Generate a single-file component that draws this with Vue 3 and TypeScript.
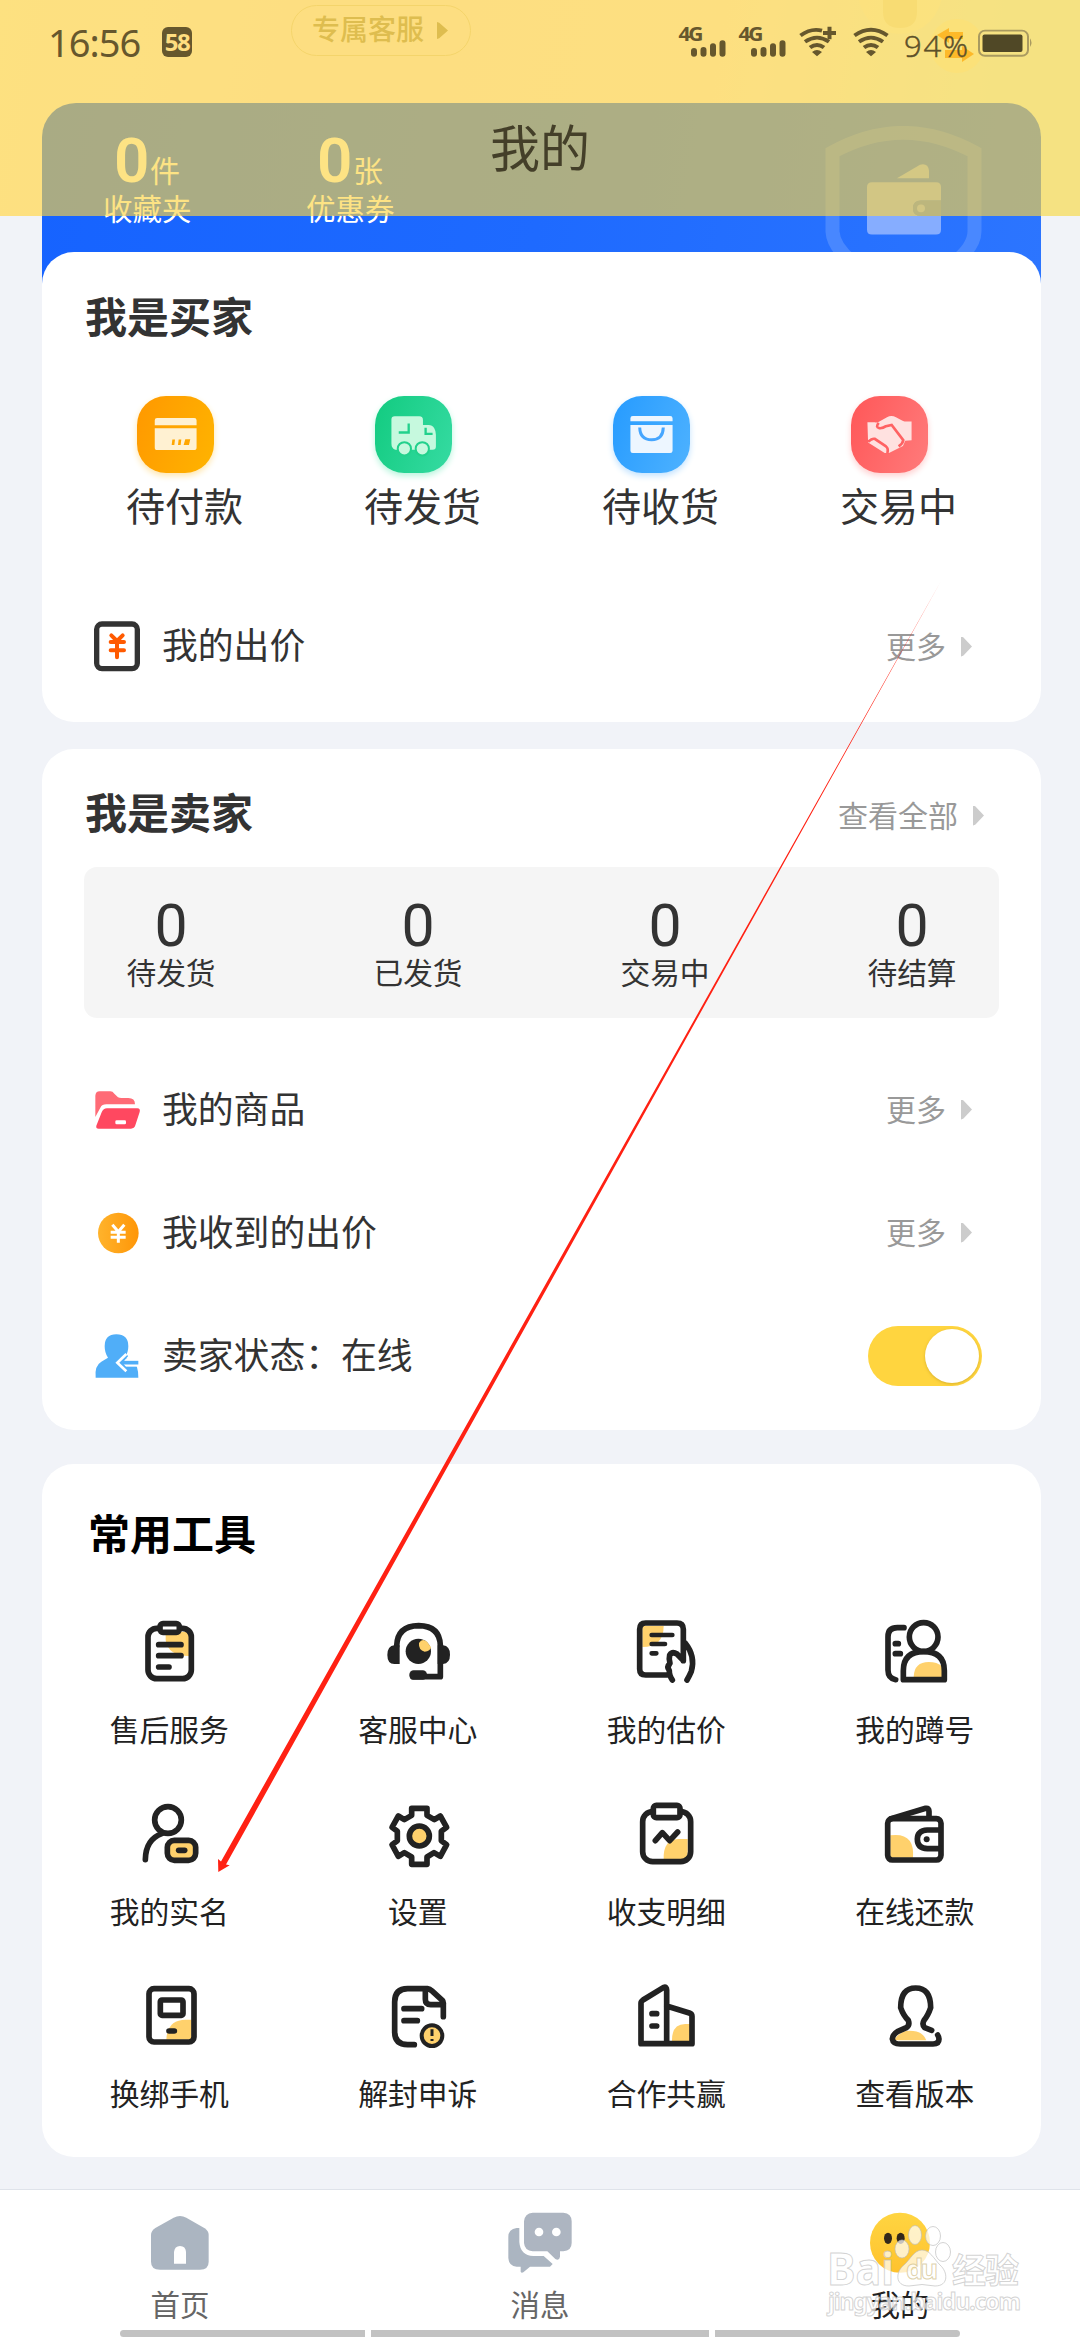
<script setup lang="ts">
interface Label { id: string; label: string }

const favourites = [
  { n: 0, unit: '件', label: '收藏夹' },
  { n: 0, unit: '张', label: '优惠券' },
]
const orders: Label[] = [
  { id: 'pay', label: '待付款' },
  { id: 'ship', label: '待发货' },
  { id: 'receive', label: '待收货' },
  { id: 'deal', label: '交易中' },
]
const stats = ['待发货', '已发货', '交易中', '待结算']
const tools: Label[] = [
  { id: 'after', label: '售后服务' },
  { id: 'service', label: '客服中心' },
  { id: 'value', label: '我的估价' },
  { id: 'squat', label: '我的蹲号' },
  { id: 'realname', label: '我的实名' },
  { id: 'settings', label: '设置' },
  { id: 'detail', label: '收支明细' },
  { id: 'repay', label: '在线还款' },
  { id: 'phone', label: '换绑手机' },
  { id: 'appeal', label: '解封申诉' },
  { id: 'coop', label: '合作共赢' },
  { id: 'version', label: '查看版本' },
]
</script>

<template>
  <div class="page">
    <section class="hero">
      <div class="service"><span>专属客服</span><i class="tri"></i></div>
      <svg class="mascot" viewBox="0 0 135 90">
        <circle cx="50" cy="-8" r="42" fill="#fffbe9" opacity=".6" />
        <path d="M33 0H67V12Q67 28 50 28Q33 28 33 12Z" fill="#e5d4a0" opacity=".4" />
        <circle cx="107" cy="46" r="27" fill="#fff8d5" opacity=".7" />
        <path d="M87 35L99 28V32H113V39H99V43ZM124 54L112 62V58H95V50H112V46Z" fill="#ff8a00" />
      </svg>
      <div class="blue">
        <div v-for="f in favourites" :key="f.label" class="fav">
          <div class="favnum"><b>{{ f.n }}</b><span>{{ f.unit }}</span></div>
          <div class="favlabel">{{ f.label }}</div>
        </div>
        <svg class="shield" viewBox="825 131 157 160" preserveAspectRatio="none">
          <path d="M832.5 158Q903 118 974.500 158V240Q974 270 903 300Q834 270 832.500 240Z" fill="none" stroke="#5b93ff" stroke-opacity=".65" stroke-width="14" />
          <path d="M897 185L920 171Q928 169 929 177V185Z" fill="#8cb3ff" />
          <path d="M872 189H936Q941 189 941 194V208H921Q913 208 913 216Q913 224 921 224H941V238Q941 243 936 243H872Q867 243 867 238V194Q867 189 872 189Z" fill="#86adff" />
          <path d="M941 208H921Q913 208 913 216Q913 224 921 224H941Z" fill="#4b82ec" />
          <circle cx="921" cy="216" r="4" fill="#86adff" />
        </svg>
      </div>
    </section>

    <section class="card buyer">
      <h2>我是买家</h2>
      <div class="orders">
        <div v-for="o in orders" :key="o.id" class="order">
          <div class="tile" :class="o.id">
            <svg v-if="o.id === 'pay'" viewBox="231 77 231 232">
              <path d="M291 143H403Q410 143 410 150V165H284V150Q284 143 291 143ZM284 174H410V232Q410 240 402 240H291Q284 240 284 232Z" fill="#fff1d2" />
              <path d="M337 208h8l-2 17h-8zM356 208h8l-2 17h-8zM376 207h15l-4 18h-16z" fill="#ffa600" />
            </svg>
            <svg v-else-if="o.id === 'ship'" viewBox="945 77 231 232">
              <path d="M1004 138H1078Q1089 138 1089 149V164H1106Q1117 164 1123 174Q1128 182 1128 194V229Q1128 239 1118 239H1006Q994 235 994 220V148Q994 138 1004 138Z" fill="#c6f9de" />
              <path d="M1046 160V187H1016M1097 173V191H1118" fill="none" stroke="#22d18c" stroke-width="7" />
              <g fill="#c6f9de" stroke="#22d18c" stroke-width="6"><circle cx="1033" cy="236" r="20" /><circle cx="1087" cy="236" r="20" /></g>
            </svg>
            <svg v-else-if="o.id === 'receive'" viewBox="159 77 231 232">
              <path d="M218 137H331Q338 137 338 144V153H211V144Q211 137 218 137ZM211 164H338V242Q338 249 331 249H218Q211 249 211 242Z" fill="#edf6ff" />
              <path d="M239 172Q240 209 275 209Q309 209 310 172" fill="none" stroke="#46a6ff" stroke-width="9" />
            </svg>
            <svg v-else viewBox="873 77 231 232">
              <path d="M922 156H944Q951 159 958 154L981 141Q994 134 1008 141Q1026 151 1034 154H1055V210L1036 212L1029 228L987 249L974 249L924 217Z" fill="#ffe1e0" />
              <path d="M956 158Q945 171 958 174Q968 175 978 168L995 164L1030 210Q1029 220 1016 229M924 215Q936 204 944 206L978 229Q986 235 982 249" fill="none" stroke="#ff6263" stroke-width="8" />
            </svg>
          </div>
          <span>{{ o.label }}</span>
        </div>
      </div>
      <div class="row">
        <svg class="ricon" viewBox="96 740 150 180">
          <rect x="110" y="764" width="122" height="134" rx="16" fill="#fff" stroke="#333" stroke-width="16" />
          <path d="M154 798L171 815L188 798M152 818H192M152 843H192M171 815V864" fill="none" stroke="#ff5a00" stroke-width="12" stroke-linecap="round" stroke-linejoin="round" />
        </svg>
        <span>我的出价</span>
        <div class="more">更多<i class="tri"></i></div>
      </div>
    </section>

    <section class="card seller">
      <div class="head"><h2>我是卖家</h2><div class="all">查看全部<i class="tri"></i></div></div>
      <div class="stats">
        <div v-for="s in stats" :key="s" class="stat"><b>0</b><span>{{ s }}</span></div>
      </div>
      <div class="row">
        <svg class="ricon" viewBox="96 57 150 180">
          <path d="M106 168V104Q107 91 119 91H151Q158 91 163 98L174 109Q178 111 184 111H205Q225 111 225 130H139Q126 130 121 140Z" fill="#ff6b76" />
          <path d="M141 142H232Q242 143 239 153L226 193Q223 203 213 203H116Q107 203 109 194L125 154Q130 142 141 142Z" fill="#ff4860" />
          <rect x="166" y="178" width="32" height="12" rx="4" fill="#fff" />
        </svg>
        <span>我的商品</span>
        <div class="more">更多<i class="tri"></i></div>
      </div>
      <div class="row">
        <svg class="ricon" viewBox="96 426 150 180">
          <defs><linearGradient id="coin" x1="0" x2="1"><stop stop-color="#ffb32c" /><stop offset="1" stop-color="#ff9607" /></linearGradient></defs>
          <circle cx="175" cy="516" r="61" fill="url(#coin)" />
          <path d="M157 491L175 512L193 491M152 514H197M152 529H197M175 512V545" fill="none" stroke="#fff" stroke-width="9" />
        </svg>
        <span>我收到的出价</span>
        <div class="more">更多<i class="tri"></i></div>
      </div>
      <div class="row">
        <svg class="ricon" viewBox="96 795 150 180">
          <path d="M107 950Q103 914 124 902L144 890Q134 876 134 856Q134 820 169 820Q205 820 205 856Q205 876 194 890L220 902Q235 911 235 950Z" fill="#50aef8" />
          <path d="M240 905H181" fill="none" stroke="#fff" stroke-width="24" />
          <path d="M200 881L180 905L200 929" fill="none" stroke="#50aef8" stroke-width="12" />
          <path d="M235 905H185" fill="none" stroke="#50aef8" stroke-width="11" />
          <path d="M199 879L172 905L199 931" fill="none" stroke="#fff" stroke-width="8" />
        </svg>
        <span>卖家状态：在线</span>
        <div class="toggle"><i></i></div>
      </div>
    </section>

    <section class="card toolcard">
      <h2>常用工具</h2>
      <div class="tools">
        <div v-for="t in tools" :key="t.id" class="tool">
          <svg v-if="t.id === 'after'" viewBox="217 465 216 216">
            <path class="y" d="M315 515H385V588Q322 588 315 540Z" />
            <rect class="s" x="262" y="505" width="130" height="151" rx="26" />
            <rect class="s w" x="298" y="491" width="58" height="26" rx="9" />
            <path class="s" d="M294 554H361M294 587H361M294 621H325" />
          </svg>
          <svg v-else-if="t.id === 'service'" viewBox="963 465 216 216">
            <path class="s" d="M1007 558Q1009 498 1073 497Q1136 498 1138 556V650H1056" />
            <path class="b" d="M1016 556H1000Q979 558 979 585Q979 612 1000 612H1016ZM1130 556H1146Q1167 558 1167 584Q1167 610 1146 612H1130Z" />
            <rect class="b" x="1045" y="631" width="53" height="28" rx="13" />
            <circle class="b" cx="1072" cy="574" r="38" />
            <path class="y" d="M1074 549Q1083 534 1098 545L1110 562Q1108 574 1091 575Q1072 570 1074 549Z" />
          </svg>
          <svg v-else-if="t.id === 'value'" viewBox="207 75 216 216">
            <path class="y" d="M244 108H308Q308 171 244 171Z" />
            <path class="s" d="M326 255H254Q236 255 236 237V118Q236 99 254 99H348Q367 99 367 118V212L348 192Q334 183 326 195Q323 207 327 220Q316 230 325 242Q324 254 334 270M373 160Q404 199 391 244Q385 258 378 270M367 140V212" />
            <path class="s" style="stroke-width: 14px" d="M272 135H334M272 162H312M272 190H286" />
          </svg>
          <svg v-else-if="t.id === 'squat'" viewBox="954 75 216 216">
            <path class="y" d="M1058 260Q1060 216 1103 216Q1129 216 1143 229V262H1058Z" />
            <path class="s" d="M1029 113H1009Q981 113 981 140V240Q981 265 1004 269M1003 161H1012M1003 191H1018" />
            <circle class="s" cx="1088" cy="141" r="43" />
            <path class="s" d="M1027 269V242Q1027 185 1088 185Q1150 185 1150 242V269Z" />
          </svg>
          <svg v-else-if="t.id === 'realname'" viewBox="217 1011 216 216">
            <circle class="s" cx="322" cy="1080" r="40" />
            <path class="s" d="M303 1121Q255 1139 254 1199" />
            <rect class="s f" x="320" y="1141" width="85" height="60" rx="21" />
            <path class="s" d="M354 1171H372" />
          </svg>
          <svg v-else-if="t.id === 'settings'" viewBox="963 1011 216 216">
            <path class="s" d="M1052 1045H1098V1066L1120 1079L1138 1068L1157 1102L1141 1114V1142L1157 1154L1138 1189L1119 1178L1098 1191V1213H1052V1191L1030 1178L1012 1189L993 1154L1009 1142V1114L993 1102L1012 1068L1030 1079L1052 1066Z" />
            <circle class="s f" cx="1075" cy="1128" r="30" />
          </svg>
          <svg v-else-if="t.id === 'detail'" viewBox="207 621 216 216">
            <path class="y" d="M308 808Q306 748 352 747H380V808Z" />
            <rect class="s" x="245" y="665" width="144" height="150" rx="30" />
            <rect class="s w" x="277" y="646" width="80" height="37" rx="9" />
            <path class="s" d="M283 752L304 728L326 752L350 726" />
          </svg>
          <svg v-else-if="t.id === 'repay'" viewBox="954 621 216 216">
            <path class="y" d="M988 736Q1062 726 1056 803H988Z" />
            <path class="s" d="M990 686L1094 655Q1104 653 1104 664V684" />
            <rect class="s" x="980" y="686" width="160" height="124" rx="14" />
            <path class="s" d="M1137 720H1099Q1069 722 1069 747Q1069 775 1099 776H1137" />
            <circle class="b" cx="1097" cy="748" r="9" />
          </svg>
          <svg v-else-if="t.id === 'phone'" viewBox="217 237 216 216">
            <path class="y" d="M317 419Q320 359 375 359H393V419Z" />
            <rect class="s" x="265" y="266" width="135" height="160" rx="15" />
            <rect class="s" x="299" y="300" width="68" height="46" rx="5" />
            <path class="s" d="M325 393H341" />
          </svg>
          <svg v-else-if="t.id === 'appeal'" viewBox="963 237 216 216">
            <path class="s" d="M1060 434H1040Q1001 434 1001 395V306Q1001 266 1040 266H1099Q1107 267 1112 272L1144 301Q1148 305 1147 313V350M1093 268V298Q1093 314 1109 314H1145M1029 326H1082M1029 362H1069" />
            <circle class="s f" cx="1113" cy="407" r="31" style="stroke-width: 12px" />
            <path d="M1113 388V408M1113 417V423" fill="none" stroke="#222" stroke-width="9" />
          </svg>
          <svg v-else-if="t.id === 'coop'" viewBox="207 177 216 216">
            <path class="y" d="M333 363Q332 311 374 312H387V363Z" />
            <path class="s" d="M240 371V249Q240 244 246 240L308 202Q317 199 317 210V371H240ZM317 258L385 279Q393 282 393 289V371H317M273 281H287M273 318H287" />
          </svg>
          <svg v-else viewBox="954 177 216 216">
            <path class="y" d="M1000 361Q1007 342 1035 333Q1085 329 1096 361Z" />
            <path class="s" d="M1112 331L1091 323Q1082 313 1089 301Q1101 287 1109 263Q1109 204 1064 204Q1019 204 1019 263Q1027 287 1042 301Q1047 315 1036 323L1009 335Q995 343 994 357Q996 372 1018 372H1116Q1134 372 1134 357Q1134 351 1130 345" />
          </svg>
          <span>{{ t.label }}</span>
        </div>
      </div>
    </section>

    <nav>
      <div class="tab">
        <svg viewBox="252 921 216 216">
          <path d="M341 953Q360 943 379 953L434 985Q446 993 446 1005V1085Q446 1109 420 1109H300Q273 1109 273 1085V1005Q273 993 286 984Z" fill="#abb5c1" />
          <path d="M342 1091V1056Q344 1038 360 1038Q377 1038 378 1056V1091Z" fill="#fff" />
        </svg>
        <span>首页</span>
      </div>
      <div class="tab">
        <svg viewBox="1332 921 216 216">
          <path d="M1378 984H1370Q1345 988 1345 1010V1074Q1347 1099 1370 1100H1382V1115Q1384 1120 1390 1117L1410 1100H1470L1478 1092L1451 1068H1420Q1381 1067 1378 1026Z" fill="#abb5c1" />
          <path d="M1418 938H1510Q1535 940 1535 964V1029Q1535 1052 1510 1054H1500V1070Q1498 1083 1486 1077L1462 1054H1418Q1394 1052 1392 1029V964Q1394 940 1418 938Z" fill="#adb5c1" />
          <circle cx="1437" cy="996" r="13" fill="#fff" /><circle cx="1489" cy="996" r="13" fill="#fff" />
        </svg>
        <span>消息</span>
      </div>
      <div class="tab active">
        <svg viewBox="912 861 216 216">
          <defs><linearGradient id="face" x2="0" y2="1"><stop stop-color="#ffd541" /><stop offset="1" stop-color="#ffc22e" /></linearGradient></defs>
          <circle cx="1020" cy="968" r="90" fill="url(#face)" />
          <ellipse cx="984" cy="955" rx="12" ry="17" fill="#33281b" /><ellipse cx="1022" cy="955" rx="12" ry="17" fill="#33281b" />
        </svg>
        <span>我的</span>
      </div>
    </nav>

    <header class="topbar">
      <div class="status">
        <span class="clock">16:56</span>
        <span class="badge">58</span>
        <svg class="sys" viewBox="670 20 370 50" preserveAspectRatio="none">
          <g class="t"><text x="678.500" y="43" textLength="25">4G</text><text x="738.500" y="43" textLength="25">4G</text></g>
          <g stroke="#66572d" stroke-width="6" stroke-linecap="round">
            <path d="M694 53V56M703.500 52V56M713 48V56M722.500 45V56" /><path d="M754 53V56M763.500 52V56M773 48V56M782.500 45V56" />
          </g>
          <g fill="none" stroke="#66572d" stroke-width="4">
            <path d="M800.500 37Q811 29 822 32M805 43.500Q817 35 829 43.500M810 49.500Q817 44 824 49.500" />
            <path d="M823 34.500H836M829.500 28V41" />
            <path d="M854.500 37Q871 25 887.500 37M859 43.500Q871 35 883 43.500M864 49.500Q871 44 878 49.500" />
          </g>
          <path d="M812 54Q817 50 822 54L817 58.500ZM866 54Q871 50 876 54L871 58.500Z" fill="#66572d" />
          <text class="pct" x="904" y="59" textLength="64">94%</text>
          <rect x="979" y="32" width="49" height="26" rx="6" fill="none" stroke="#a99a60" stroke-width="2" />
          <path d="M1030 40Q1033 44.500 1030 49Z" fill="#a99a60" />
          <rect x="982.500" y="36" width="40" height="18" rx="2" fill="#504826" />
        </svg>
      </div>
      <h1>我的</h1>
    </header>

    <svg class="overlay" viewBox="0 0 1080 2340">
      <path d="M941 581L226 1864.500L229.700 1865.300L218.300 1872L218 1859L221 1861.500Z" fill="#ff2113" />
      <g fill="#c2c2c2">
        <path d="M123.500 2330H365V2337H123.500Q120 2337 120 2333.500Q120 2330 123.500 2330ZM371 2330H709V2337H371ZM715 2330H956.500Q960 2330 960 2333.500Q960 2337 956.500 2337H715Z" />
      </g>
      <g class="wm">
        <ellipse cx="915" cy="2235" rx="6.500" ry="9.500" /><ellipse cx="933" cy="2236" rx="7.500" ry="9.500" />
        <ellipse cx="902" cy="2249" rx="7" ry="9" /><ellipse cx="943" cy="2252" rx="7.500" ry="9.500" />
        <path d="M922 2250C930 2250 934 2259 940 2265C948 2272 949 2286 935 2286Q922 2283 909 2286C894 2286 896 2271 904 2265C910 2260 914 2250 922 2250Z" />
        <text x="827" y="2285" font-size="45" textLength="67" lengthAdjust="spacingAndGlyphs">Bai</text>
        <text x="906" y="2279" font-size="27" textLength="32" style="stroke: #cbb87c">du</text>
        <text x="952" y="2283" font-size="34" textLength="67">经验</text>
        <text x="828" y="2310" font-size="23" textLength="193">jingyan.baidu.com</text>
      </g>
    </svg>
  </div>
</template>

<style>
body { margin: 0; background: #f1f3f8; }
</style>

<style scoped>
.page { position: relative; width: 1080px; height: 2340px; overflow: hidden; background: #f1f3f8; color: #333; font-family: "Noto Sans CJK SC", sans-serif; display: flex; flex-direction: column; }
h1, h2 { margin: 0; }
i { font-style: normal; }
.tri { display: block; width: 11px; height: 20px; background: #ccc; clip-path: polygon(0 0, 20% 4%, 100% 50%, 20% 96%, 0 100%); }
.hero { position: relative; flex: none; height: 252px; padding: 5px 39px 0 42px; box-sizing: border-box; background: linear-gradient(100deg, #fff8f4 0%, #fff1f6 30%, #fff4f4 65%, #e9fcfa 90%) 0 0 / 100% 216px no-repeat; }
.service { width: 178px; height: 49px; margin-left: 249px; border: 1px solid #e6d5b8; border-radius: 26px; display: flex; align-items: center; gap: 13px; color: #a8946a; font-size: 28px; font-weight: 500; line-height: 50px; }
.service span { margin: -5px 0 0 20px; }
.service .tri { height: 17px; background: #a8946a; }
.mascot { position: absolute; left: 850px; top: 0; width: 135px; height: 90px; }
.blue { position: relative; height: 190px; margin-top: 47px; border-radius: 34px 34px 0 0; background: linear-gradient(100deg, #1663ff, #1e6aff 50%, #2c75ff); display: flex; padding-left: 61px; box-sizing: border-box; color: #fff; }
.fav { width: 203px; padding-top: 27px; }
.favnum { display: flex; align-items: baseline; height: 56px; line-height: 62px; padding-left: 11px; font-size: 30px; }
.favnum b { font: 600 62px/62px Roboto, sans-serif; width: 36px; }
.favlabel { font-size: 29.500px; line-height: 40px; margin-top: 1px; }
.shield { position: absolute; left: 783px; top: 23px; width: 157px; height: 155px; }
.card { position: relative; flex: none; margin: 0 39px 0 42px; border-radius: 32px; background: #fff; box-sizing: border-box; }
h2 { font-size: 42px; line-height: 60px; font-weight: 700; }
.buyer { height: 470px; padding: 33px 0 0; }
.buyer h2 { margin-left: 43px; }
.orders { display: flex; margin: 51px 0 0 77px; height: 188px; }
.order { width: 238px; flex: none; }
.tile { width: 77px; height: 77px; margin-left: 18px; border-radius: 29px; }
.tile svg { display: block; width: 77px; height: 77px; }
.pay { background: linear-gradient(110deg, #ff9800, #ffb400); box-shadow: 0 3px 6px #ffe6ad; }
.ship { background: linear-gradient(110deg, #12cb80, #36dba2); box-shadow: 0 3px 6px #b8f5dd; }
.receive { background: linear-gradient(110deg, #269bff, #4eb2ff); box-shadow: 0 3px 6px #c3e3ff; }
.deal { background: linear-gradient(110deg, #ff5758, #ff7b7b); box-shadow: 0 3px 6px #ffd0d0; }
.order span { display: block; width: 131px; text-align: center; font-size: 39px; line-height: 56px; margin-top: 3px; }
.row { height: 123px; padding: 0 69px 0 50px; display: flex; align-items: center; font-size: 35.800px; line-height: 52px; }
.row > span { margin-left: 20px; margin-top: -5px; }
.ricon { width: 50px; height: 60px; flex: none; }
.more, .all { margin-left: auto; display: flex; align-items: center; color: #999; font-size: 30px; line-height: 40px; gap: 15px; }
.more { margin-top: -4px; }
.more .tri, .all .tri { margin-top: 4px; }
.buyer .more { margin-top: -2px; }
.all { margin-top: 5px; }
.seller { height: 681px; margin-top: 27px; padding-top: 32px; }
.head { display: flex; height: 60px; padding: 0 57px 0 43px; align-items: center; }
.stats { height: 151px; margin: 26px 42px 30px 42px; background: #f5f5f5; border-radius: 13px; display: flex; justify-content: space-between; box-sizing: border-box; padding: 27px 42px 0; }
.stat { width: 90px; display: flex; flex-direction: column; align-items: center; font-size: 29.700px; }
.stat b { font: 400 59px/64px Roboto, sans-serif; }
.stat span { line-height: 30px; margin-top: -1px; }
.toggle { width: 114px; height: 60px; box-sizing: border-box; border-radius: 30px; background: #ffd53f; margin-left: auto; margin-right: -10px; padding: 3px; display: flex; justify-content: flex-end; }
.toggle i { width: 54px; height: 54px; border-radius: 50%; background: #fff; box-shadow: 0 1px 3px #b7921f88; }
.toolcard { height: 693px; margin-top: 34px; padding-top: 38px; color: #222; }
.toolcard h2 { margin-left: 46px; color: #000; }
.tools { display: grid; grid-template-columns: repeat(4, 248.500px); grid-auto-rows: 182px; margin: 53px 0 0 3px; }
.tool { display: flex; flex-direction: column; align-items: center; font-size: 29.800px; line-height: 44px; }
.tool svg { width: 72px; height: 72px; margin-bottom: 19px; }
.s { fill: none; stroke: #222; stroke-width: 17px; stroke-linecap: round; stroke-linejoin: round; }
.y { fill: #ffd16c; }
.s.f { fill: #ffd16c; }
.s.w { fill: #fff; }
.b { fill: #222; }
nav { margin-top: 32px; border-top: 1px solid #dfe3ea; background: #fff; height: 150px; display: flex; flex: none; color: #666; }
.tab { width: 360px; display: flex; flex-direction: column; align-items: center; padding-top: 17px; font-size: 29.500px; line-height: 40px; }
.tab svg { width: 72px; height: 72px; margin-bottom: 4px; }
.active { color: #222; }
.topbar { position: absolute; inset: 0 0 auto 0; height: 216px; background: rgba(252, 211, 63, .645); text-align: center; color: #443f29; }
.status { display: flex; height: 84px; padding: 19px 40px 0 48px; box-sizing: border-box; align-items: flex-start; }
.clock { width: 114px; text-align: left; font: 400 38px/50px "Noto Sans", sans-serif; letter-spacing: -1px; color: #66572d; margin-top: -2px; }
.badge { width: 30px; height: 30px; margin-top: 8px; background: #66572d; color: #ffde80; border-radius: 6px; font: 700 24px/30px "Noto Sans", sans-serif; letter-spacing: -1.500px; }
.sys { width: 370px; height: 48.400px; margin-left: auto; }
.t { font: 700 21px "Open Sans", sans-serif; fill: #66572d; }
.pct { font: 300 31px "Open Sans", sans-serif; fill: #5c5029; stroke: #5c5029; stroke-width: .5px; }
h1 { font-size: 50px; line-height: 60px; font-weight: 400; margin-top: 31px; }
.overlay { position: absolute; inset: 0; width: 1080px; height: 2340px; pointer-events: none; }
.wm { fill: #fff; fill-opacity: .72; stroke: #bbb; stroke-opacity: .65; stroke-width: 1px; font-family: "Noto Sans", "Noto Sans CJK SC", sans-serif; font-weight: 700; }
</style>
